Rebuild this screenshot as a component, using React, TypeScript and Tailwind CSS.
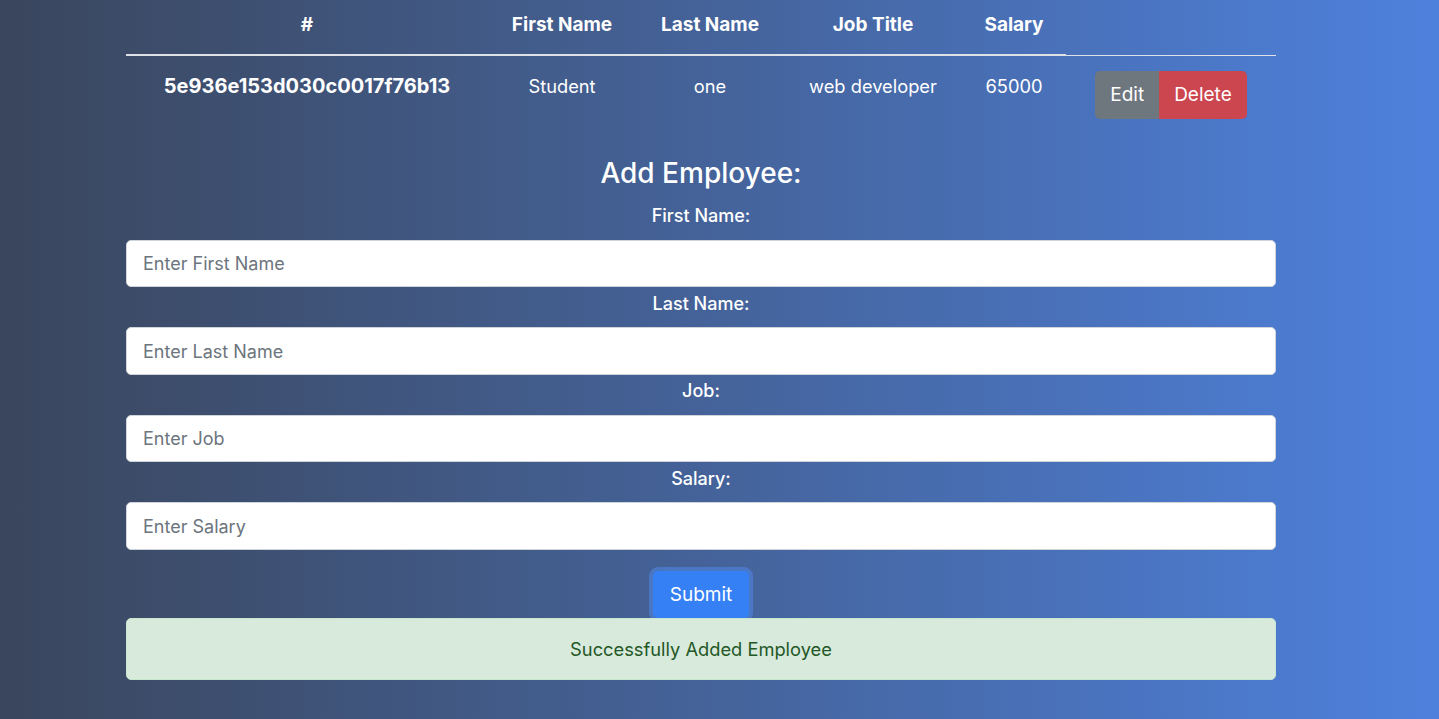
import { useState } from "react";

interface Employee {
  _id: string;
  firstName: string;
  lastName: string;
  jobTitle: string;
  salary: number;
}

const employees: Employee[] = [
  {
    _id: "5e936e153d030c0017f76b13",
    firstName: "Student",
    lastName: "one",
    jobTitle: "web developer",
    salary: 65000,
  },
];

const fields = [
  { key: "firstName", label: "First Name:", placeholder: "Enter First Name" },
  { key: "lastName", label: "Last Name:", placeholder: "Enter Last Name" },
  { key: "jobTitle", label: "Job:", placeholder: "Enter Job" },
  { key: "salary", label: "Salary:", placeholder: "Enter Salary" },
] as const;

export default function App() {
  const [form, setForm] = useState({ firstName: "", lastName: "", jobTitle: "", salary: "" });
  const [added, setAdded] = useState(true);

  function handleSubmit(e: React.FormEvent) {
    e.preventDefault();
    setAdded(true);
  }

  return (
    <div
      className="min-h-[719px] w-full bg-gradient-to-r from-[#3a465d] to-[#4e81dd] text-white"
      style={{ fontFamily: "Inter, 'Noto Sans', sans-serif" }}
    >
      <div className="ml-[126px] w-[1150px] pb-10">
        {/* Employee table */}
        <table className="w-full table-fixed border-collapse text-center text-[18.3px] leading-[30px]">
          <colgroup>
            <col className="w-[362px]" />
            <col className="w-[148px]" />
            <col className="w-[148px]" />
            <col className="w-[178px]" />
            <col className="w-[104px]" />
            <col className="w-[210px]" />
          </colgroup>
          <thead>
            <tr className="text-[19px]">
              <th className="border-b-2 border-[#dee2e6] pt-[10px] pb-[14px] font-bold">#</th>
              <th className="border-b-2 border-[#dee2e6] pt-[10px] pb-[14px] font-bold">First Name</th>
              <th className="border-b-2 border-[#dee2e6] pt-[10px] pb-[14px] font-bold">Last Name</th>
              <th className="border-b-2 border-[#dee2e6] pt-[10px] pb-[14px] font-bold">Job Title</th>
              <th className="border-b-2 border-[#dee2e6] pt-[10px] pb-[14px] font-bold">Salary</th>
            </tr>
          </thead>
          <tbody>
            {employees.map((emp) => (
              <tr key={emp._id}>
                <td className="border-t border-[#dee2e6] p-[15px] align-top text-[20px] font-bold">{emp._id}</td>
                <td className="border-t border-[#dee2e6] p-[15px] align-top">{emp.firstName}</td>
                <td className="border-t border-[#dee2e6] p-[15px] align-top">{emp.lastName}</td>
                <td className="border-t border-[#dee2e6] p-[15px] align-top">{emp.jobTitle}</td>
                <td className="border-t border-[#dee2e6] p-[15px] align-top">{emp.salary}</td>
                <td className="border-t border-[#dee2e6] p-[15px] align-top">
                  <div className="inline-flex text-[19px] leading-[30px]">
                    <button className="rounded-l-[5px] bg-[#6e767e] px-[15px] py-[9px] text-white">Edit</button>
                    <button className="rounded-r-[5px] bg-[#cc4650] px-[15px] py-[9px] text-white">Delete</button>
                  </div>
                </td>
              </tr>
            ))}
          </tbody>
        </table>

        {/* Add employee form */}
        <form onSubmit={handleSubmit} className="mt-[21px] flex flex-col items-center">
          <h4 className="text-[28px] leading-[36px] font-medium">Add Employee:</h4>
          <div className="mt-[9px] flex w-full flex-col">
            {fields.map((f) => (
              <div key={f.key} className="flex flex-col items-center">
                <label className="mt-[1.5px] text-[18px] leading-[30px] font-medium">{f.label}</label>
                <input
                  value={form[f.key]}
                  onChange={(e) => setForm({ ...form, [f.key]: e.target.value })}
                  placeholder={f.placeholder}
                  className="mt-[8.5px] h-[47.5px] w-full rounded-[5px] border border-[#ced4da] bg-white px-[16px] pt-[1px] text-[18px] text-[#495057] outline-none placeholder:text-[#6c757d]"
                />
              </div>
            ))}
          </div>
          <button
            type="submit"
            className="mt-[21px] h-[47.5px] rounded-[5px] bg-[#3580f5] px-[17px] pt-[1px] text-[19px] leading-[30px] text-white shadow-[0_0_0_4px_rgba(80,140,240,0.5)]"
          >
            Submit
          </button>
          {added && (
            <div className="w-full rounded-[5px] border border-[#c9e6cf] bg-[#d8eadb] py-[15px] text-center text-[18.3px] leading-[30px] text-[#235726]">
              Successfully Added Employee
            </div>
          )}
        </form>
      </div>
    </div>
  );
}
